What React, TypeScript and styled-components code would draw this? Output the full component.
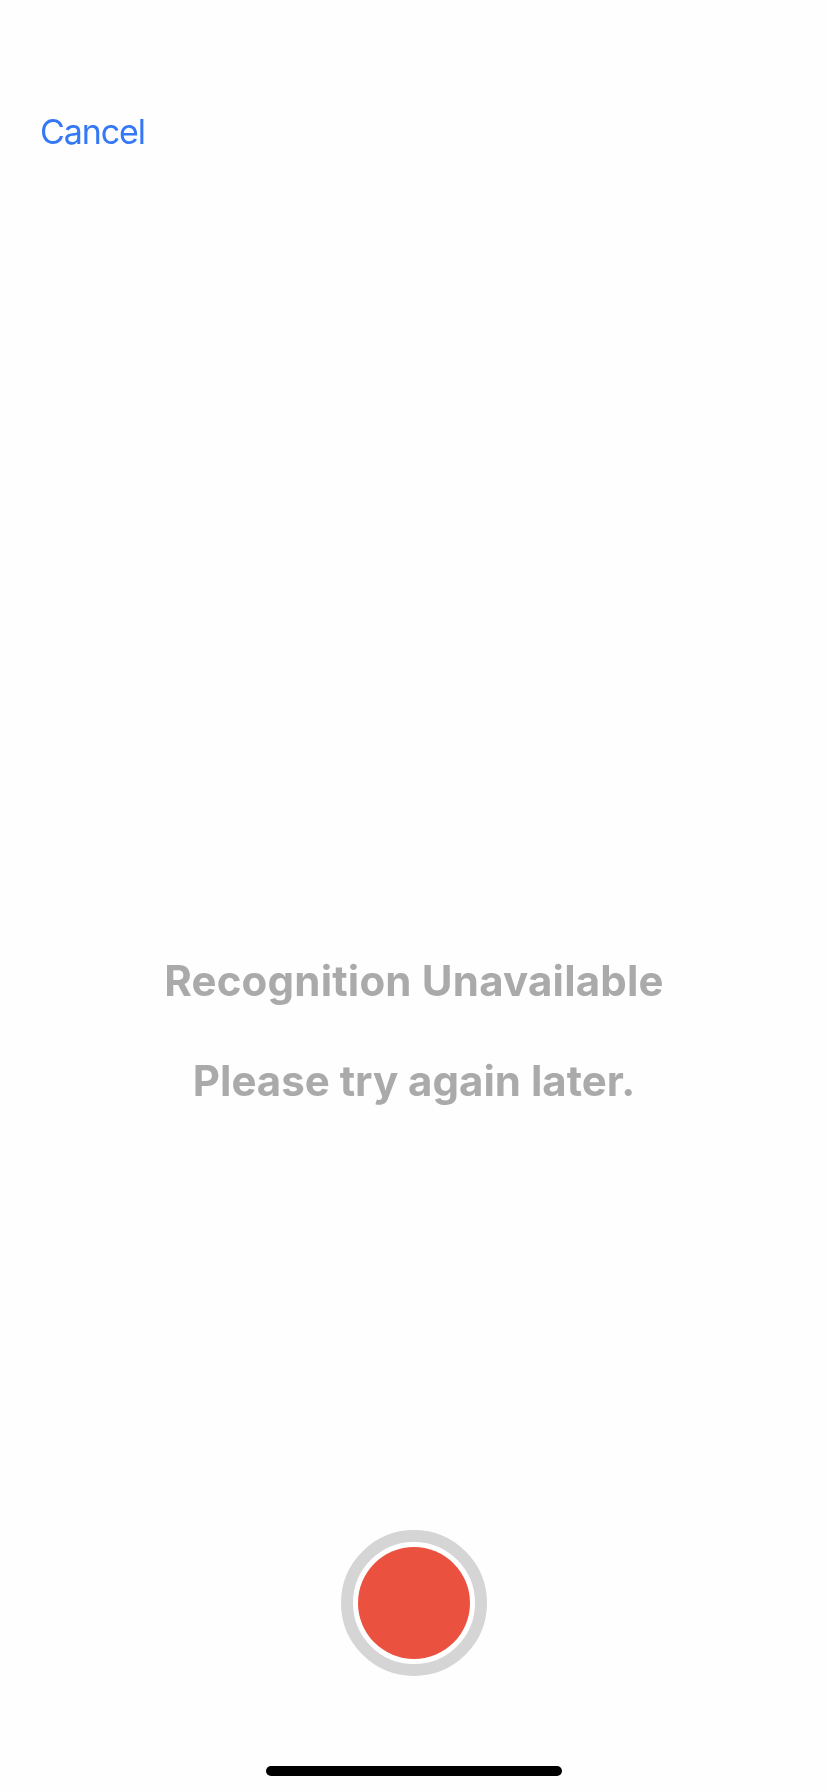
import styled, { createGlobalStyle } from "styled-components";

const GlobalStyle = createGlobalStyle`
  html, body {
    margin: 0;
    padding: 0;
    background: #fefefe;
  }
`;

const Screen = styled.div`
  display: flex;
  flex-direction: column;
  width: 828px;
  height: 1792px;
  overflow: hidden;
  font-family: Inter, "Liberation Sans", sans-serif;
  -webkit-font-smoothing: antialiased;
`;

const NavBar = styled.div`
  display: flex;
  padding: 111px 40px 0;
  will-change: opacity;
`;

const CancelLink = styled.a`
  font-size: 34px;
  line-height: 42px;
  letter-spacing: -1.1px;
  color: #3478f6;
  cursor: pointer;
`;

const Messages = styled.div`
  display: flex;
  flex-direction: column;
  align-items: center;
  gap: 52px;
  padding-top: 804px;
  will-change: opacity;
`;

const Message = styled.div<{ $tracking?: number }>`
  font-size: 42px;
  line-height: 48px;
  font-weight: 700;
  letter-spacing: ${(p) => p.$tracking ?? 0}px;
  color: #aaaaaa;
`;

const RecordArea = styled.div`
  display: flex;
  justify-content: center;
  padding-top: 425px;
`;

const RecordRing = styled.button`
  display: flex;
  align-items: center;
  justify-content: center;
  box-sizing: border-box;
  width: 146px;
  height: 146px;
  padding: 0;
  border: 12px solid #d5d5d5;
  border-radius: 50%;
  background: #ffffff;
`;

const RecordDot = styled.div`
  width: 112px;
  height: 112px;
  border-radius: 50%;
  background: #eb513f;
`;

const HomeArea = styled.div`
  display: flex;
  justify-content: center;
  margin-top: auto;
  padding-bottom: 16px;
`;

const HomeIndicator = styled.div`
  width: 296px;
  height: 10px;
  border-radius: 5px;
  background: #000000;
`;

export default function App() {
  return (
    <Screen>
      <GlobalStyle />
      <NavBar>
        <CancelLink>Cancel</CancelLink>
      </NavBar>
      <Messages>
        <Message $tracking={0.2}>Recognition Unavailable</Message>
        <Message>Please try again later.</Message>
      </Messages>
      <RecordArea>
        <RecordRing>
          <RecordDot />
        </RecordRing>
      </RecordArea>
      <HomeArea>
        <HomeIndicator />
      </HomeArea>
    </Screen>
  );
}
